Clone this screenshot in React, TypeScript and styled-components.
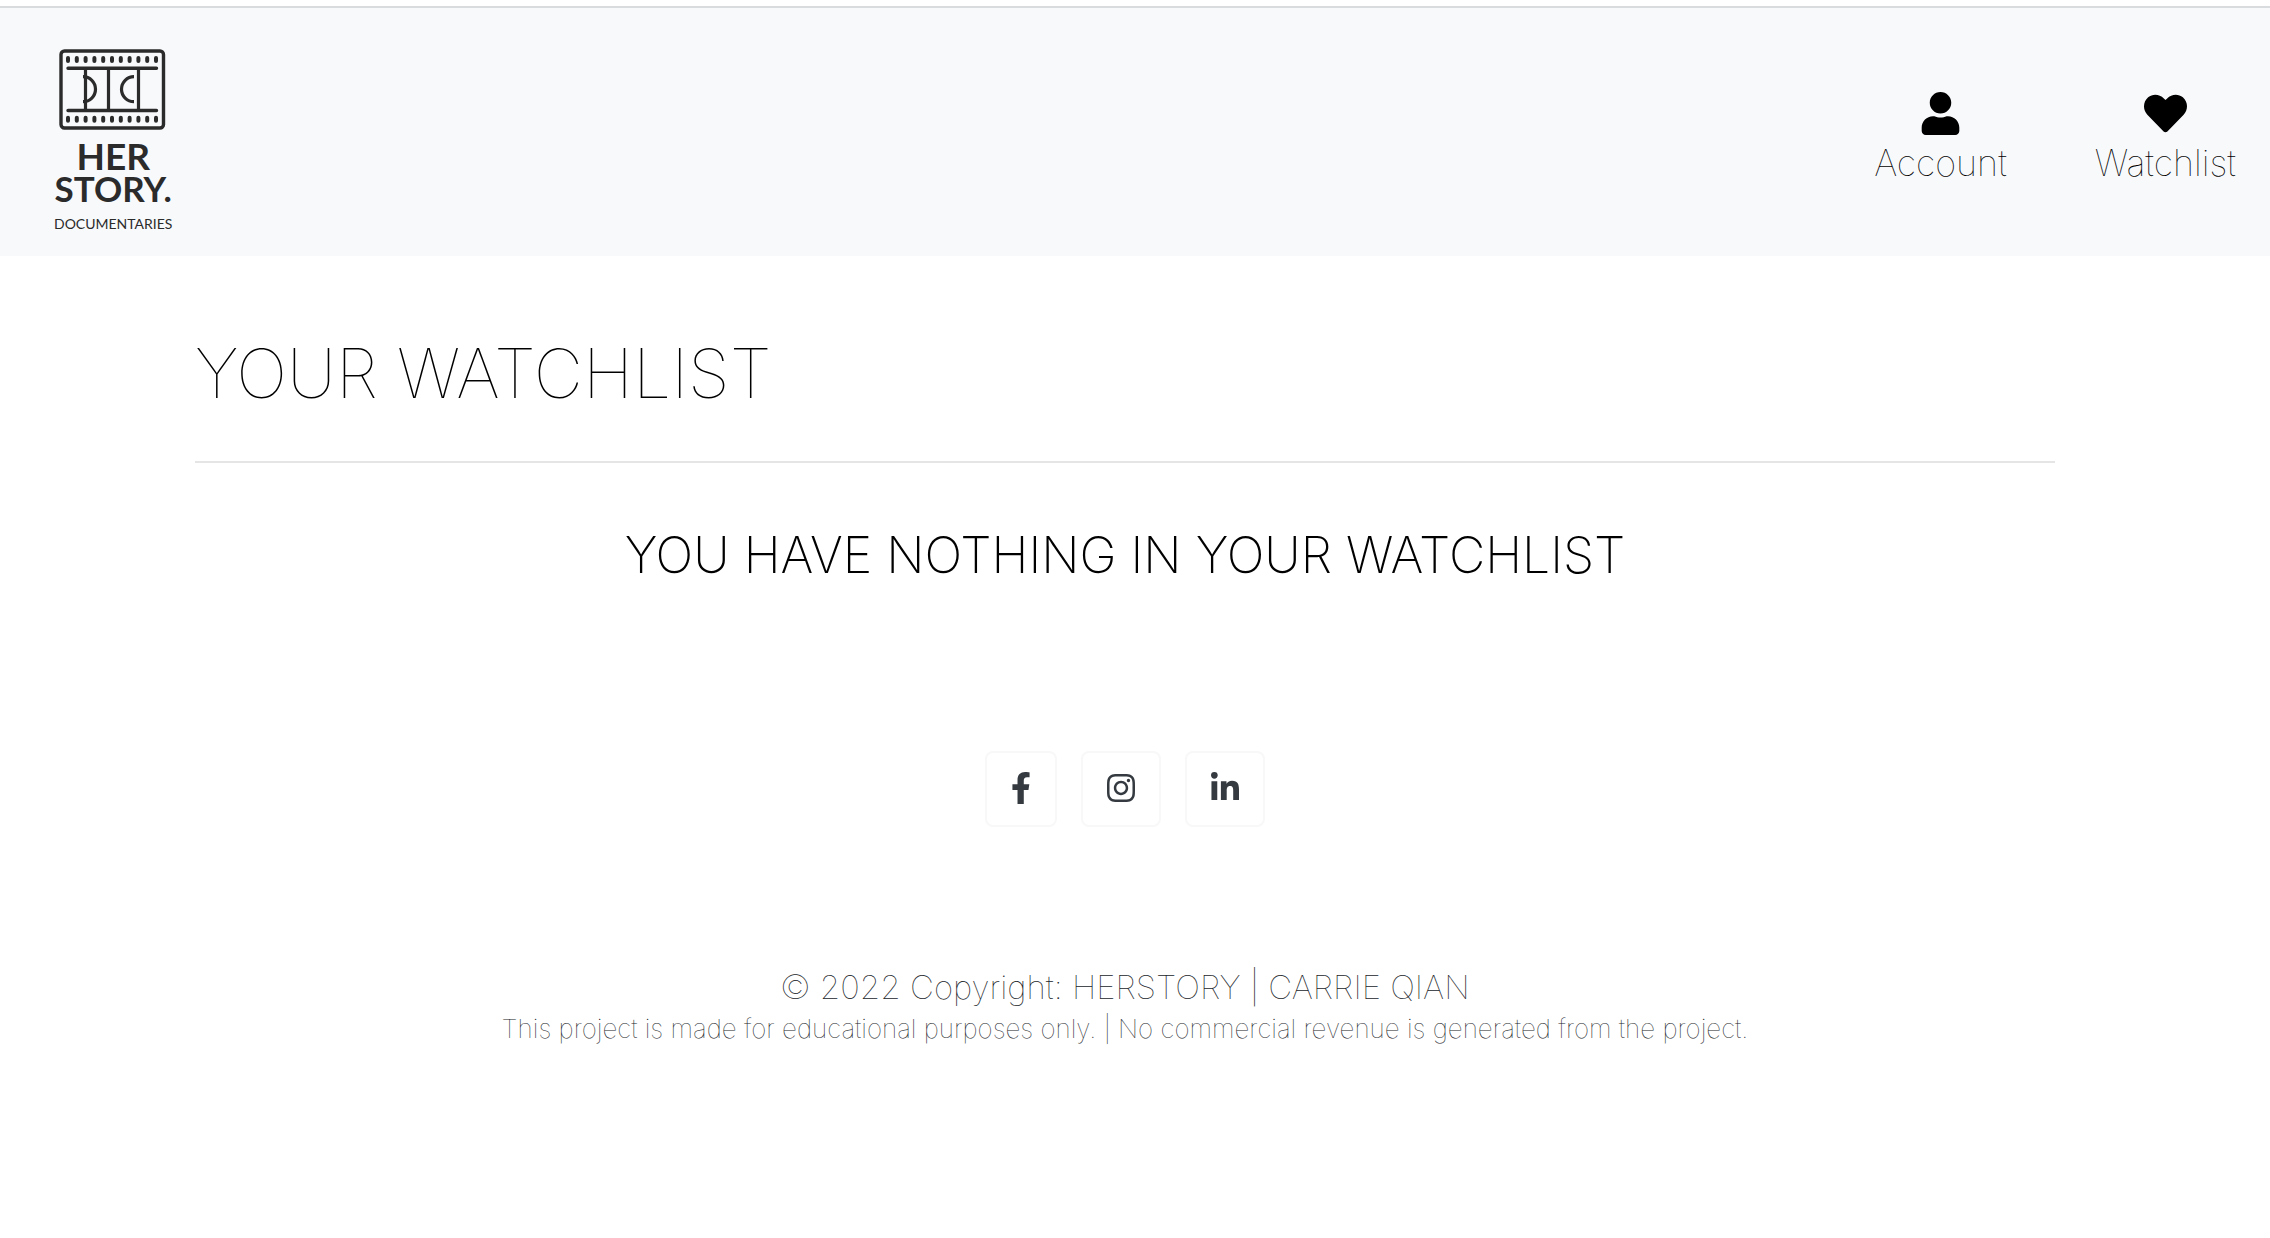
import React from "react";
import styled, { createGlobalStyle } from "styled-components";
import { FaUser, FaHeart, FaFacebookF, FaInstagram, FaLinkedinIn } from "react-icons/fa";

const GlobalStyle = createGlobalStyle`
  *, *::before, *::after { box-sizing: border-box; }
  body {
    margin: 0;
    background: #fff;
    color: #000;
    font-family: Inter, "Liberation Sans", sans-serif;
    font-weight: 100;
  }
  a { color: inherit; text-decoration: none; }
`;

const TopEdge = styled.div`
  height: 8px;
  border-bottom: 2px solid #d9dcdf;
`;

const Header = styled.header`
  display: flex;
  justify-content: space-between;
  align-items: flex-start;
  padding: 40px 34px 22px 54px;
  background: #f8f9fb;
`;

const Logo = styled.a`
  display: flex;
  flex-direction: column;
  align-items: center;
  color: #2b2b2b;
  font-family: Lato, "Liberation Sans", sans-serif;
`;

const FilmFrame = styled.svg`
  display: block;
  width: 108px;
  height: 84px;
  margin-bottom: 8px;
`;

const LogoWord = styled.span<{ $size: number }>`
  font-size: ${(p) => p.$size}px;
  line-height: 32px;
  font-weight: 700;
`;

const LogoTagline = styled.span`
  margin-top: 10px;
  font-size: 14px;
  line-height: 20px;
  font-weight: 400;
`;

const Nav = styled.nav`
  display: flex;
  gap: 88px;
  padding-top: 44px;
`;

const NavLink = styled.a`
  display: flex;
  flex-direction: column;
  align-items: center;
  gap: 4px;
  font-size: 36px;
  line-height: 48px;

  svg {
    width: 43px;
    height: 43px;
  }
`;

const Body = styled.div`
  padding-right: 20px;
`;

const Main = styled.main`
  max-width: 1860px;
  margin: 0 auto;
  padding-top: 76px;
`;

const Title = styled.h1`
  margin: 0 0 47px;
  font-size: 68px;
  line-height: 82px;
  font-weight: 100;
`;

const Rule = styled.hr`
  margin: 0;
  border: 0;
  border-top: 2px solid #e5e5e5;
`;

const EmptyMessage = styled.h2`
  margin: 62px 0 0;
  font-size: 50px;
  line-height: 60px;
  font-weight: 200;
  text-align: center;
`;

const Footer = styled.footer`
  padding-top: 166px;
  padding-bottom: 48px;
  color: #212529;
  text-align: center;
`;

const SocialList = styled.div`
  display: flex;
  justify-content: center;
  gap: 24px;
  margin-bottom: 136px;
`;

const SocialLink = styled.a<{ $iconWidth: number }>`
  display: flex;
  align-items: flex-start;
  height: 76px;
  padding: 19px 24px;
  border: 2px solid #f8f8f9;
  border-radius: 8px;
  color: #343a40;

  svg {
    width: ${(p) => p.$iconWidth}px;
    height: 32px;
  }
`;

const Copyright = styled.p`
  margin: 0;
  font-size: 33px;
  line-height: 48px;
`;

const Disclaimer = styled.p`
  margin: 0;
  font-size: 26px;
  line-height: 36px;
`;

const perforations = Array.from({ length: 11 }, (_, i) => 9 + i * 8.8);

function LogoMark() {
  return (
    <FilmFrame viewBox="0 0 108 84" fill="none" stroke="#2b2b2b" aria-hidden="true">
      <rect x="2" y="3" width="102.5" height="77" rx="3.5" strokeWidth="3.4" />
      {perforations.map((x) => (
        <path key={x} d={`M${x} 10v3M${x} 69.7v3`} strokeWidth="4" strokeLinecap="round" />
      ))}
      <path d="M9 20.2H97.5M9 62.5H97.5" strokeWidth="3.4" strokeLinecap="round" />
      <path d="M26.5 20V62M49.5 20V62M79.5 20V62" strokeWidth="3.2" />
      <path d="M24 28.7A12.5 12.5 0 0 1 24 53.7M75 28.7A12.5 12.5 0 0 0 75 53.7" strokeWidth="3.2" />
    </FilmFrame>
  );
}

const socials = [
  { name: "Facebook", Icon: FaFacebookF, width: 20 },
  { name: "Instagram", Icon: FaInstagram, width: 28 },
  { name: "LinkedIn", Icon: FaLinkedinIn, width: 28 },
];

export default function App() {
  return (
    <>
      <GlobalStyle />
      <TopEdge />
      <Header>
        <Logo href="#">
          <LogoMark />
          <LogoWord $size={37}>HER</LogoWord>
          <LogoWord $size={35}>STORY.</LogoWord>
          <LogoTagline>DOCUMENTARIES</LogoTagline>
        </Logo>
        <Nav>
          <NavLink href="#account">
            <FaUser />
            Account
          </NavLink>
          <NavLink href="#watchlist">
            <FaHeart />
            Watchlist
          </NavLink>
        </Nav>
      </Header>
      <Body>
        <Main>
          <Title>YOUR WATCHLIST</Title>
          <Rule />
          <EmptyMessage>YOU HAVE NOTHING IN YOUR WATCHLIST</EmptyMessage>
        </Main>
        <Footer>
          <SocialList>
            {socials.map(({ name, Icon, width }) => (
              <SocialLink key={name} href={`#${name.toLowerCase()}`} aria-label={name} $iconWidth={width}>
                <Icon />
              </SocialLink>
            ))}
          </SocialList>
          <Copyright>© 2022 Copyright: HERSTORY | CARRIE QIAN</Copyright>
          <Disclaimer>
            This project is made for educational purposes only. | No commercial revenue is generated from the
            project.
          </Disclaimer>
        </Footer>
      </Body>
    </>
  );
}
